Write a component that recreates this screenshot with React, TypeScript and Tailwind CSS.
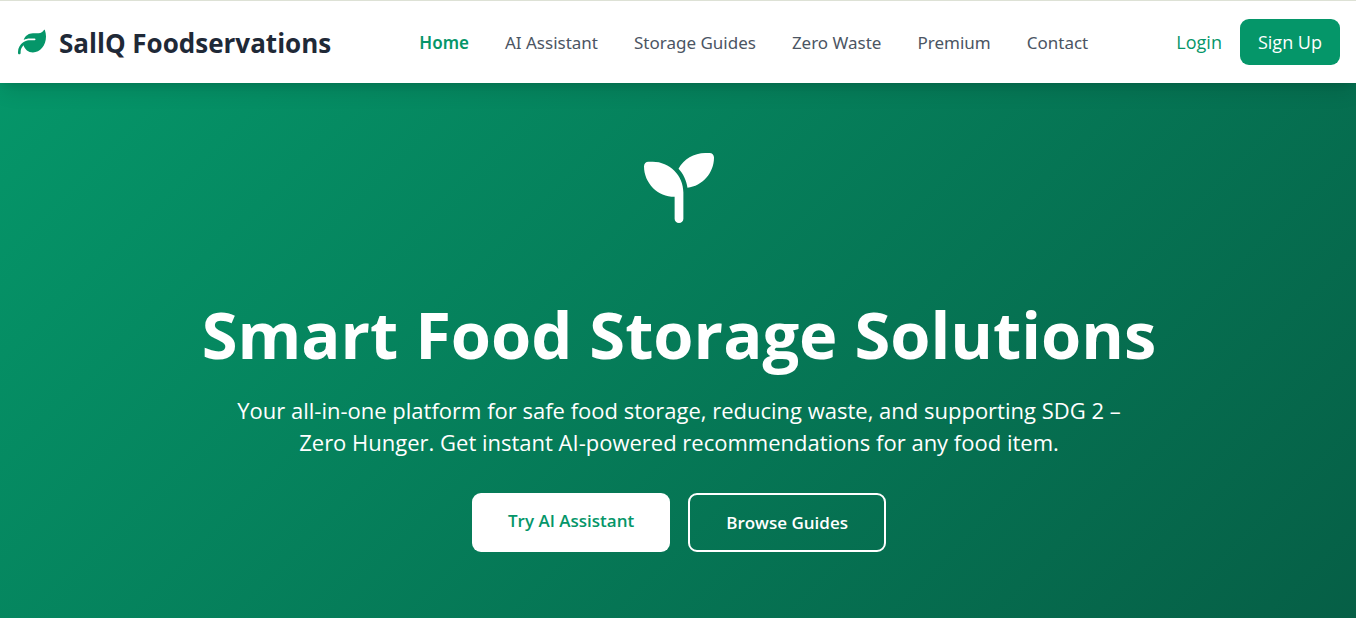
import { FaLeaf } from "react-icons/fa6";

const links = ["Home", "AI Assistant", "Storage Guides", "Zero Waste", "Premium", "Contact"];

function Seedling() {
  return (
    <svg viewBox="0 0 512 512" className="size-[70px]" fill="currentColor" aria-hidden="true">
      <path d="M512 32c0 113.6-84.6 207.5-194.2 222c-7.1-53.4-30.6-101.6-65.3-139.3C290.8 46.3 364 0 448 0h32c17.7 0 32 14.3 32 32zM0 96C0 78.3 14.3 64 32 64H64c123.7 0 224 100.3 224 224v32V480c0 17.7-14.3 32-32 32s-32-14.3-32-32V320C100.3 320 0 219.7 0 96z" />
    </svg>
  );
}

function Header() {
  return (
    <header className="relative z-10 flex items-center justify-between border-t border-[#dde1d5] bg-white py-[18px] pr-4 pl-[18px] shadow-[0_10px_20px_-3px_rgba(0,0,0,0.12),0_4px_8px_-4px_rgba(0,0,0,0.12)]">
      <a href="#" className="flex items-center gap-[13px] pt-[2px] text-[26px] leading-9 font-bold text-[#1f2937]">
        <FaLeaf className="mb-[2px] size-7 text-[#059669]" aria-hidden="true" />
        SallQ Foodservations
      </a>
      <nav className="flex items-center gap-9 pt-[2px] font-['Noto_Sans',sans-serif] text-[17px] leading-7 text-[#4b5563]">
        {links.map((label, i) => (
          <a key={label} href="#" className={i === 0 ? "font-semibold text-[#059669]" : ""}>
            {label}
          </a>
        ))}
      </nav>
      <div className="flex items-center gap-[18px] text-[18px] leading-7">
        <a href="#" className="text-[#059669]">Login</a>
        <a href="#" className="rounded-[9px] bg-[#059669] px-[18px] py-[9px] text-white">Sign Up</a>
      </div>
    </header>
  );
}

export default function App() {
  return (
    <div className="flex min-h-screen flex-col font-['Open_Sans','Noto_Sans',sans-serif]">
      <Header />
      <main className="flex grow flex-col items-center bg-linear-[135deg,#059669,#065f46] pt-[70px] pr-4 pb-[72px] pl-[18px] text-center text-white">
        <Seedling />
        <h1 className="mt-[77px] text-[65px] leading-[68px] font-bold">Smart Food Storage Solutions</h1>
        <p className="mt-[26px] max-w-[900px] text-[22px] leading-8">
          Your all-in-one platform for safe food storage, reducing waste, and supporting SDG 2 – Zero Hunger. Get
          instant AI-powered recommendations for any food item.
        </p>
        <div className="mt-[35px] flex gap-[18px] text-[17px] leading-[27px] font-semibold">
          <a href="#" className="rounded-[9px] bg-white px-9 pt-[14px] pb-[18px] text-[#059669]">Try AI Assistant</a>
          <a href="#" className="rounded-[9px] border-2 border-white px-9 py-[14px]">Browse Guides</a>
        </div>
      </main>
    </div>
  );
}
